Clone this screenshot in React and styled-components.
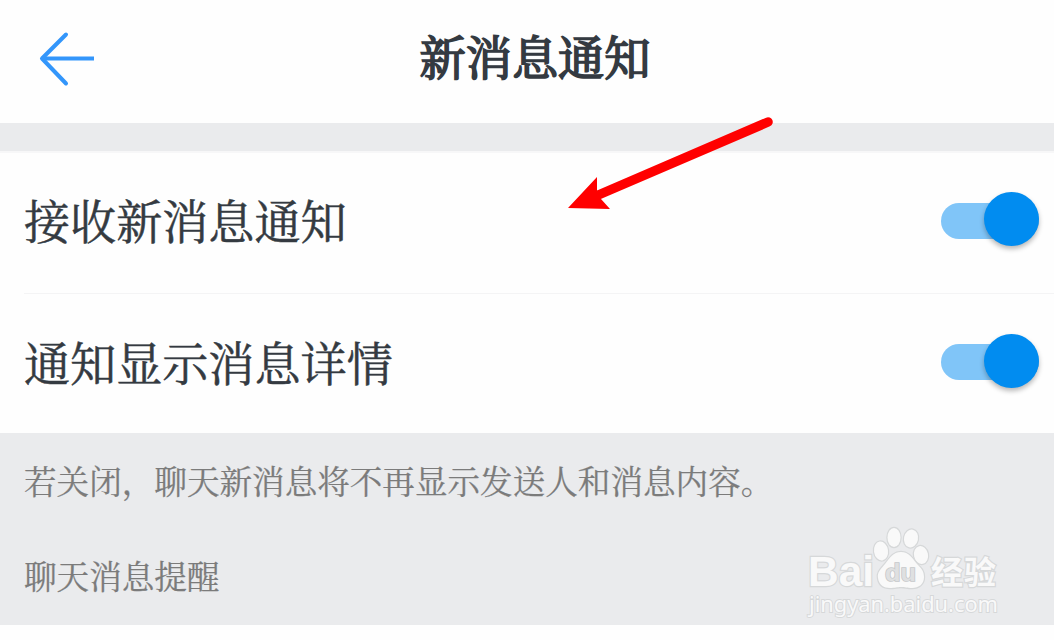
import React, { useState } from 'react';
import styled, { createGlobalStyle } from 'styled-components';

const GlobalStyle = createGlobalStyle`
  body {
    margin: 0;
    background: #fff;
    overflow: hidden;
  }

  * {
    box-sizing: border-box;
  }
`;

const Screen = styled.div`
  position: relative;
  width: 1054px;
  height: 640px;
  display: flex;
  flex-direction: column;
  background: #fefefe;
  color: #343a41;
  font-family: 'Noto Serif CJK SC', 'Noto Sans CJK SC', serif;
`;

const Header = styled.header`
  height: 123px;
  display: grid;
  grid-template-columns: 120px 1fr 120px;
  align-items: center;
  padding-bottom: 5px;
`;

const BackButton = styled.button`
  display: flex;
  padding: 0 0 0 36px;
  border: 0;
  background: none;
`;

const Title = styled.h1`
  margin: 0;
  padding: 0 0 8px 16px;
  text-align: center;
  font-size: 46.2px;
  line-height: 60px;
  font-weight: 400;
  -webkit-text-stroke: 1.7px currentColor;
`;

const Band = styled.div`
  height: 30px;
  background: #eaebed;
  border-bottom: 2px solid #f7f7f8;
`;

const SettingList = styled.ul`
  margin: 0;
  padding: 0 0 0 24px;
  list-style: none;
`;

const SettingRow = styled.li`
  display: flex;
  align-items: center;
  justify-content: space-between;
  height: ${props => (props.$divided ? '141px' : '139px')};
  padding-right: 15px;
  padding-top: ${props => (props.$divided ? '0' : '2px')};
  border-bottom: ${props => (props.$divided ? '1px solid #f4f4f5' : '0')};
`;

const SettingLabel = styled.span`
  padding-bottom: 8px;
  font-size: 46.1px;
  line-height: 60px;
  font-weight: 400;
  -webkit-text-stroke: 0.5px currentColor;
`;

const Switch = styled.button`
  display: flex;
  align-items: center;
  justify-content: ${props => (props.$on ? 'flex-end' : 'flex-start')};
  width: 98px;
  height: 36px;
  padding: 0;
  border: 0;
  margin-top: -5px;
  border-radius: 18px;
  background: ${props => (props.$on ? '#80c5f8' : '#c9ccd0')};
`;

const Thumb = styled.span`
  flex: none;
  width: 55px;
  height: 54px;
  margin-top: -3px;
  border-radius: 50%;
  background: #018cf0;
  box-shadow: 0 3px 5px rgba(0, 0, 0, 0.28);
`;

const Footer = styled.section`
  height: 192px;
  padding: 23px 24px 0;
  background: #eaebed;
  color: #7b7b7b;
  font-size: 32.6px;
  line-height: 48px;
  -webkit-text-stroke: 0.25px currentColor;
`;

const Hint = styled.p`
  margin: 0 0 47px;
`;

const SectionTitle = styled.h2`
  margin: 0;
  font-size: inherit;
  font-weight: 400;
`;

const Pointer = styled.svg`
  position: absolute;
  left: 560px;
  top: 110px;
  pointer-events: none;
`;

const Watermark = styled.svg`
  position: absolute;
  left: 800px;
  top: 520px;
  pointer-events: none;
`;

const BackIcon = () => (
  <svg width="62" height="60" viewBox="0 0 62 60" fill="none" stroke="#3396fb" strokeWidth="4" strokeLinecap="round" strokeLinejoin="round">
    <path d="M30 5.5 6 29.5l24 25" />
    <path d="M6 29.5h52" strokeLinecap="butt" />
  </svg>
);

const Toggle = ({ label }) => {
  const [on, setOn] = useState(true);

  return (
    <Switch role="switch" aria-label={label} aria-checked={on} $on={on} onClick={() => setOn(!on)}>
      <Thumb />
    </Switch>
  );
};

const settings = ['接收新消息通知', '通知显示消息详情'];

const App = () => (
  <Screen>
    <GlobalStyle />
    <Header>
      <BackButton aria-label="返回">
        <BackIcon />
      </BackButton>
      <Title>新消息通知</Title>
    </Header>
    <Band />
    <SettingList>
      {settings.map((label, i) => (
        <SettingRow key={label} $divided={i < settings.length - 1}>
          <SettingLabel>{label}</SettingLabel>
          <Toggle label={label} />
        </SettingRow>
      ))}
    </SettingList>
    <Footer>
      <Hint>若关闭，聊天新消息将不再显示发送人和消息内容。</Hint>
      <SectionTitle>聊天消息提醒</SectionTitle>
    </Footer>

    <Pointer width="220" height="110" viewBox="0 0 220 110">
      <path d="M208 12 Q120 50 36 86" fill="none" stroke="#f00" strokeWidth="9.5" strokeLinecap="round" />
      <path d="M8 98 37 67v13l4 9 9 10z" fill="#f00" />
    </Pointer>

    <Watermark width="210" height="105" viewBox="0 0 210 105" fill="#f9f9f9" stroke="#d6d8d9" strokeWidth="2.4" paintOrder="stroke">
      <text x="8" y="66" fontFamily="Liberation Sans" fontSize="43" fontWeight="700" textLength="66" lengthAdjust="spacingAndGlyphs">Bai</text>
      <ellipse cx="81" cy="31" rx="7" ry="9.5" transform="rotate(-8 81 31)" />
      <ellipse cx="94" cy="17.5" rx="6.5" ry="9.5" />
      <ellipse cx="111" cy="18.5" rx="7" ry="9" transform="rotate(12 111 18.5)" />
      <ellipse cx="121" cy="35" rx="7" ry="9" transform="rotate(-12 121 35)" />
      <path d="M101 32c-8 0-11 6-16 12-4 5-8 8-7 14 1 7 6 10 12 10 5 0 7-1 11-1s6 1 11 1c7 0 12-4 12-11 0-6-3-9-7-13-5-6-8-12-16-12z" />
      <text x="85" y="61" fontFamily="Liberation Sans" fontSize="24" fontWeight="700" fill="#dfe0e1" stroke="#c6c8ca" strokeWidth="1.6" textLength="31" lengthAdjust="spacingAndGlyphs">du</text>
      <text x="131" y="64" fontFamily="Noto Sans CJK SC" fontSize="32" fontWeight="700" textLength="65">经验</text>
      <text x="9" y="92" fontFamily="Noto Sans" fontSize="21" strokeWidth="1.8" textLength="189" lengthAdjust="spacingAndGlyphs">jingyan.baidu.com</text>
    </Watermark>
  </Screen>
);

export default App;
